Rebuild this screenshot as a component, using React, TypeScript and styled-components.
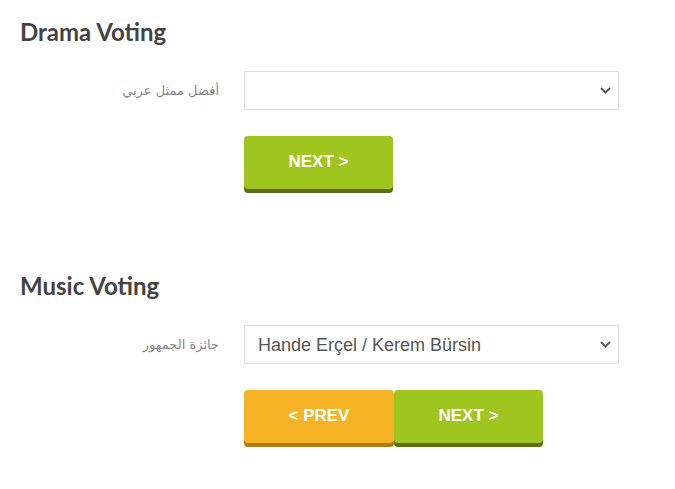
import styled, { createGlobalStyle } from 'styled-components';

const Global = createGlobalStyle`
  body {
    margin: 0;
    background: #fff;
    font-family: "Liberation Sans", Arial, sans-serif;
  }
`;

const Page = styled.div`
  width: 675px;
  padding: 16px 0 12px 20px;
  box-sizing: border-box;
`;

const Section = styled.section`
  margin-bottom: 81px;

  &:last-child {
    margin-bottom: 0;
  }
`;

const Title = styled.h2`
  margin: 0 0 23px 0;
  font-family: Lato, "Open Sans", sans-serif;
  font-weight: 700;
  font-size: 24px;
  line-height: 32px;
  color: #444;
`;

const Row = styled.div`
  display: grid;
  grid-template-columns: 199px 375px;
  column-gap: 25px;
  align-items: center;
`;

const Label = styled.label`
  text-align: right;
  font-family: "DejaVu Sans", "Liberation Sans", sans-serif;
  font-size: 13px;
  color: #888;
`;

const SelectWrap = styled.div`
  position: relative;
  height: 39px;
`;

const Select = styled.select`
  appearance: none;
  width: 100%;
  height: 39px;
  border: 1px solid #dfdfdf;
  border-radius: 0;
  background: #fff;
  padding: 0 30px 0 13px;
  font-family: "Liberation Sans", Arial, sans-serif;
  font-size: 18px;
  color: #555;
  outline: none;
`;

const Chevron = styled.svg`
  position: absolute;
  right: 8px;
  top: 16px;
  pointer-events: none;
`;

const Actions = styled.div`
  grid-column: 2;
  display: flex;
  margin-top: 26px;
`;

const Button = styled.button<{ $tone: 'green' | 'orange' }>`
  width: ${({ $tone }) => ($tone === 'orange' ? '150px' : '149px')};
  height: 53px;
  border: none;
  border-radius: 4px;
  background: ${({ $tone }) => ($tone === 'orange' ? '#f6b325' : '#a0c51f')};
  box-shadow: 0 4px 0 ${({ $tone }) => ($tone === 'orange' ? '#b27c12' : '#5c6f16')};
  color: #fff;
  font-family: "Liberation Sans", Arial, sans-serif;
  font-weight: 700;
  font-size: 17px;
  padding: 0 0 1px 0;
  cursor: pointer;
`;

function Arrow() {
  return (
    <Chevron width="11" height="7" viewBox="0 0 11 7">
      <path d="M1 1l4.5 4.5L10 1" fill="none" stroke="#555" strokeWidth="1.8" />
    </Chevron>
  );
}

export default function App() {
  return (
    <Page>
      <Global />
      <Section>
        <Title>Drama Voting</Title>
        <Row>
          <Label>أفضل ممثل عربي</Label>
          <SelectWrap>
            <Select defaultValue="">
              <option value=""></option>
            </Select>
            <Arrow />
          </SelectWrap>
          <Actions>
            <Button $tone="green">NEXT &gt;</Button>
          </Actions>
        </Row>
      </Section>
      <Section>
        <Title>Music Voting</Title>
        <Row>
          <Label>جائزة الجمهور</Label>
          <SelectWrap>
            <Select defaultValue="hk">
              <option value="hk">Hande Erçel / Kerem Bürsin</option>
            </Select>
            <Arrow />
          </SelectWrap>
          <Actions>
            <Button $tone="orange">&lt; PREV</Button>
            <Button $tone="green">NEXT &gt;</Button>
          </Actions>
        </Row>
      </Section>
    </Page>
  );
}
